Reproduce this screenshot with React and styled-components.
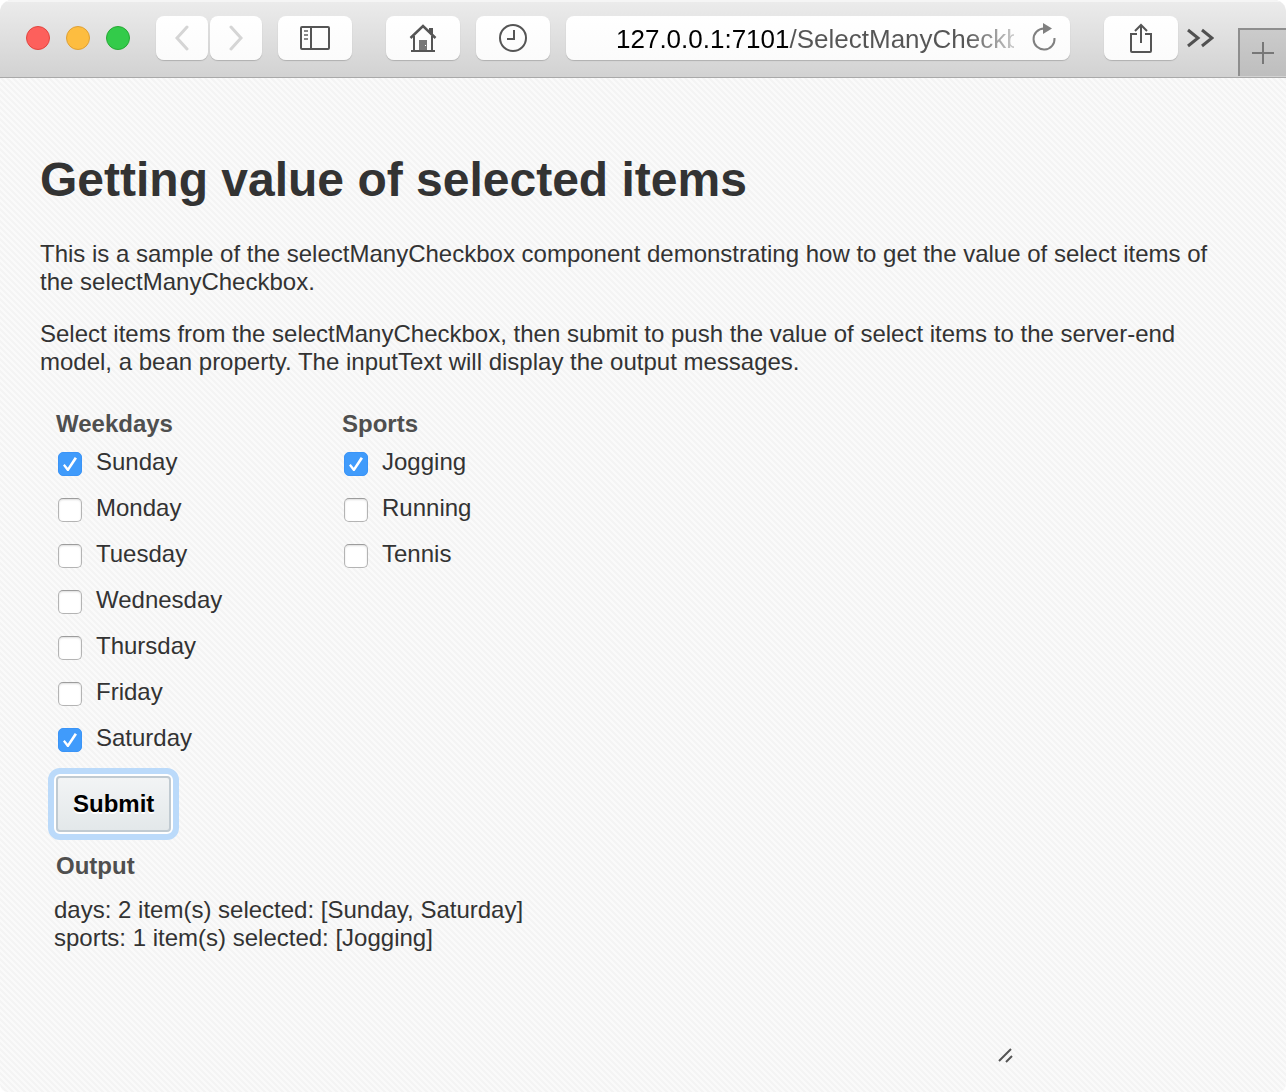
import React, { useState } from "react";
import styled, { createGlobalStyle, css } from "styled-components";

const GlobalStyle = createGlobalStyle`
  *, *::before, *::after { box-sizing: border-box; }
  html { background: #fff; }
  body {
    margin: 0;
    color: #333;
    font-family: "Liberation Sans", Arial, sans-serif;
    font-size: 24px;
    line-height: 28px;
  }
`;

const Window = styled.div`
  display: flex;
  flex-direction: column;
  min-height: 100vh;
  overflow: hidden;
  border-radius: 12px 12px 8px 8px;
  background-color: #f9f9f9;
  background-image: linear-gradient(
    45deg,
    #f4f4f4 25%,
    #fafafa 25%,
    #fafafa 50%,
    #f4f4f4 50%,
    #f4f4f4 75%,
    #fafafa 75%
  );
  background-size: 6px 6px;
`;

const Toolbar = styled.header`
  display: flex;
  align-items: center;
  height: 78px;
  padding: 0 0 1px 26px;
  border-bottom: 1px solid #a9a9a9;
  background: linear-gradient(#ececec, #d2d2d2);
  box-shadow: inset 0 2px #f5f5f5;
`;

const Group = styled.div`
  display: flex;
  align-items: center;
  gap: ${(p) => p.$gap}px;
  margin-right: ${(p) => p.$after}px;
`;

const Light = styled.button`
  width: 24px;
  height: 24px;
  padding: 0;
  border: 1px solid ${(p) => p.$edge};
  border-radius: 50%;
  background: ${(p) => p.$fill};
`;

const surface = css`
  height: 44px;
  border: 0;
  border-radius: 8px;
  background: linear-gradient(#fff, #fbfbfb);
  box-shadow: 0 1px 1px #b0b0b0;
`;

const ToolButton = styled.button`
  ${surface}
  display: flex;
  align-items: center;
  justify-content: center;
  width: ${(p) => (p.$narrow ? 52 : 74)}px;
  padding: 0;
  color: #555;

  &:disabled { color: #d5d5d5; }
`;

const PlainButton = styled.button`
  display: flex;
  padding: 0;
  border: 0;
  background: none;
  color: ${(p) => p.$tone};
`;

const AddressBar = styled.div`
  ${surface}
  display: flex;
  flex: 1;
  align-items: center;
  gap: 16px;
  min-width: 0;
  margin-right: 34px;
  padding: 0 12px 0 50px;
`;

const Address = styled.input`
  flex: 1;
  min-width: 0;
  height: 44px;
  padding: 3px 0 0;
  border: 0;
  outline: 0;
  background: linear-gradient(90deg, #000 172px, #555 172px);
  background-clip: text;
  -webkit-background-clip: text;
  -webkit-text-fill-color: transparent;
  mask-image: linear-gradient(90deg, #000 calc(100% - 48px), rgba(0, 0, 0, 0.3));
  color: #555;
  font: inherit;
  font-size: 26px;
`;

const NewTab = styled.button`
  display: flex;
  align-self: flex-end;
  align-items: center;
  justify-content: center;
  width: 48px;
  height: 48px;
  padding: 0;
  border: solid #8e8e8e;
  border-width: 2px 0 0 2px;
  background: linear-gradient(#cbcbcb, #bebebe);
  color: #777;
`;

const Page = styled.main`
  flex: 1;
  padding: 73px 40px 28px;
`;

const Title = styled.h1`
  margin: 0 0 31px;
  font-size: 48px;
  line-height: 58px;
`;

const Paragraph = styled.p`
  margin: 0 0 24px;
`;

const Form = styled.form`
  display: flex;
  flex-direction: column;
  align-items: flex-start;
  padding: 10px 0 0 16px;
`;

const Columns = styled.div`
  display: grid;
  grid-template-columns: repeat(2, 286px);
`;

const Choices = styled.fieldset`
  min-width: 0;
  margin: 0;
  padding: 0;
  border: 0;
`;

const heading = css`
  padding: 0;
  color: #4f4f4f;
  font-weight: bold;
`;

const Legend = styled.legend`
  ${heading}
  margin-bottom: 1px;
`;

const OutputLabel = styled.label`
  ${heading}
`;

const Choice = styled.label`
  display: flex;
  align-items: center;
  gap: 14px;
  height: 46px;
  padding-left: 2px;
`;

const Box = styled.input`
  appearance: none;
  display: grid;
  place-items: center;
  width: 24px;
  height: 24px;
  margin: 4px 0 0;
  border: 1px solid #b4b4b4;
  border-top-color: #9c9c9c;
  border-radius: 5px;
  background: #fff;
  box-shadow: inset 0 1px 2px #ddd;

  &:checked {
    border-color: #3b94f7;
    background: #409bfb;
    box-shadow: none;
  }

  &:checked::before {
    content: "";
    width: 14px;
    height: 14px;
    background: #fff;
    clip-path: polygon(0% 60%, 12% 50%, 34% 76%, 84% 0%, 100% 10%, 40% 100%, 30% 100%);
  }
`;

const Submit = styled.button`
  height: 56px;
  margin: 15px 0 20px;
  padding: 0 15px;
  border: 2px solid #c0cad1;
  border-radius: 4px;
  background: linear-gradient(#f2f4f5, #e3e8ea);
  box-shadow: 0 0 0 2px #fff;
  color: #000;
  font: inherit;
  font-weight: bold;
  text-shadow: 0 2px #fff;
  outline: 6px solid #bbdafa;
  outline-offset: 2px;
`;

const OutputArea = styled.div`
  position: relative;
  align-self: stretch;
  max-width: 960px;
  margin-top: 16px;
`;

const Output = styled.textarea`
  display: block;
  width: 100%;
  height: 168px;
  margin-left: -2px;
  padding: 0;
  border: 0;
  outline: 0;
  resize: none;
  background: transparent;
  color: inherit;
  font: inherit;
`;

const Grip = styled.svg`
  position: absolute;
  right: 2px;
  bottom: 0;
`;

const days = ["Sunday", "Monday", "Tuesday", "Wednesday", "Thursday", "Friday", "Saturday"];
const sports = ["Jogging", "Running", "Tennis"];

function Icon({ w, h, line = 2, children }) {
  return (
    <svg width={w} height={h} viewBox={`0 0 ${w} ${h}`} fill="none" stroke="currentColor" strokeWidth={line} aria-hidden="true">
      {children}
    </svg>
  );
}

function Checkboxes({ title, items, selected, onChange }) {
  const toggle = (item) =>
    onChange(items.filter((i) => (i === item ? !selected.includes(i) : selected.includes(i))));
  return (
    <Choices>
      <Legend>{title}</Legend>
      {items.map((item) => (
        <Choice key={item}>
          <Box type="checkbox" checked={selected.includes(item)} onChange={() => toggle(item)} />
          {item}
        </Choice>
      ))}
    </Choices>
  );
}

const report = (name, list) => `${name}: ${list.length} item(s) selected: [${list.join(", ")}]`;

export default function App() {
  const [pickedDays, setPickedDays] = useState(["Sunday", "Saturday"]);
  const [pickedSports, setPickedSports] = useState(["Jogging"]);
  const describe = () => `${report("days", pickedDays)}\n${report("sports", pickedSports)}`;
  const [output, setOutput] = useState(describe);

  return (
    <>
      <GlobalStyle />
      <Window>
        <Toolbar>
          <Group $gap={16} $after={26}>
            <Light aria-label="Close" $fill="#fd605c" $edge="#e2453f" />
            <Light aria-label="Minimize" $fill="#fdbd40" $edge="#dfa035" />
            <Light aria-label="Zoom" $fill="#33cb4a" $edge="#26a934" />
          </Group>
          <Group $gap={2} $after={16}>
            <ToolButton $narrow disabled aria-label="Back">
              <Icon w={14} h={26} line={3}><path d="M12 2 2 13l10 11" strokeLinecap="round" /></Icon>
            </ToolButton>
            <ToolButton $narrow disabled aria-label="Forward">
              <Icon w={14} h={26} line={3}><path d="m2 2 10 11L2 24" strokeLinecap="round" /></Icon>
            </ToolButton>
          </Group>
          <Group $gap={16} $after={34}>
            <ToolButton aria-label="Sidebar">
              <Icon w={30} h={24}>
                <rect x="1" y="1" width="28" height="22" rx="1" />
                <path d="M11 1v22" />
                <path d="M4 5h4M4 9h4M4 13h4" stroke="#888" />
              </Icon>
            </ToolButton>
          </Group>
          <Group $gap={16} $after={16}>
            <ToolButton aria-label="Home">
              <Icon w={28} h={28}>
                <path d="M1.500 14 14 2l12.500 12" strokeWidth="2.500" />
                <path d="M20 4h4v8l-4-4z" fill="currentColor" stroke="none" />
                <path d="M5 12v14M23 12v14M2 27h24" />
                <path d="M10 16h8v10h-8z" fill="#777" stroke="none" />
                <path d="M16 21h1v1h-1z" fill="#fff" stroke="none" />
              </Icon>
            </ToolButton>
            <ToolButton aria-label="History">
              <Icon w={28} h={28}>
                <circle cx="14" cy="14" r="13" />
                <path d="M15 6v9H8" />
              </Icon>
            </ToolButton>
          </Group>
          <AddressBar>
            <Address aria-label="Address" defaultValue="127.0.0.1:7101/SelectManyCheckbox" />
            <PlainButton $tone="#808080" aria-label="Reload">
              <Icon w={28} h={30}>
                <path d="M14 5.500A10.500 10.500 0 1 0 24.500 15" />
                <path d="M13 0v11l9-5.500z" fill="currentColor" stroke="none" />
              </Icon>
            </PlainButton>
          </AddressBar>
          <Group $gap={8} $after={24}>
            <ToolButton aria-label="Share">
              <Icon w={24} h={32}>
                <path d="M8 12H2v17q0 1 1 1h18q1 0 1-1V12h-6M12 21V3M6 9l6-6 6 6" />
              </Icon>
            </ToolButton>
            <PlainButton $tone="#505050" aria-label="More tools">
              <Icon w={28} h={20} line={3}><path d="m2 2 10 8-10 8M16 2l10 8-10 8" /></Icon>
            </PlainButton>
          </Group>
          <NewTab aria-label="New tab">
            <Icon w={22} h={22}><path d="M11 0v22M0 11h22" /></Icon>
          </NewTab>
        </Toolbar>
        <Page>
          <Title>Getting value of selected items</Title>
          <Paragraph>
            This is a sample of the selectManyCheckbox component demonstrating how to get the value of
            select items of the selectManyCheckbox.
          </Paragraph>
          <Paragraph>
            Select items from the selectManyCheckbox, then submit to push the value of select items to
            the server-end model, a bean property. The inputText will display the output messages.
          </Paragraph>
          <Form
            onSubmit={(event) => {
              event.preventDefault();
              setOutput(describe());
            }}
          >
            <Columns>
              <Checkboxes title="Weekdays" items={days} selected={pickedDays} onChange={setPickedDays} />
              <Checkboxes title="Sports" items={sports} selected={pickedSports} onChange={setPickedSports} />
            </Columns>
            <Submit type="submit">Submit</Submit>
            <OutputLabel htmlFor="output">Output</OutputLabel>
            <OutputArea>
              <Output id="output" readOnly value={output} />
              <Grip width="16" height="16" viewBox="0 0 16 16" stroke="#555" strokeWidth="2" aria-hidden="true">
                <path d="M1 13 13 1M8 14l6-6" />
              </Grip>
            </OutputArea>
          </Form>
        </Page>
      </Window>
    </>
  );
}
